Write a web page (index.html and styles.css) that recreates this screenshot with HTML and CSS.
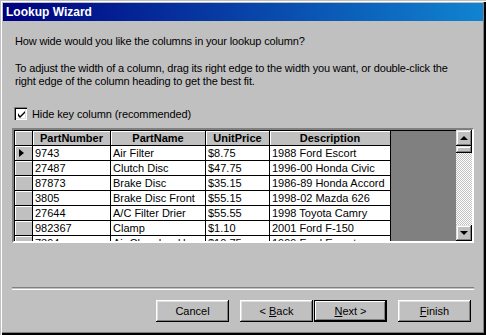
FILE: index.html
```html
<!DOCTYPE html>
<html lang="en">
<head>
<meta charset="UTF-8">
<title>Lookup Wizard</title>
<link rel="stylesheet" href="styles.css">
</head>
<body>
<div class="window">
  <div class="titlebar">Lookup Wizard</div>

  <div class="content">
    <p class="intro">How wide would you like the columns in your lookup column?</p>
    <p class="help">To adjust the width of a column, drag its right edge to the width you want, or double-click the right edge of the column heading to get the best fit.</p>

    <label class="check-row">
      <span class="checkbox">
        <svg width="7" height="7" viewBox="0 0 7 7"><path d="M0 2 L0 5 L2 7 L7 2 L7 0 L2 5 Z" fill="#000"/></svg>
      </span>
      Hide key column (recommended)
    </label>

    <!-- Datasheet -->
    <div class="sheet">
      <div class="sheet-body">
        <div class="row head">
          <div class="cell sel"></div>
          <div class="cell">PartNumber</div>
          <div class="cell">PartName</div>
          <div class="cell">UnitPrice</div>
          <div class="cell">Description</div>
        </div>
        <div class="row">
          <div class="cell sel"><span class="pointer"></span></div>
          <div class="cell">9743</div>
          <div class="cell">Air Filter</div>
          <div class="cell">$8.75</div>
          <div class="cell">1988 Ford Escort</div>
        </div>
        <div class="row">
          <div class="cell sel"></div>
          <div class="cell">27487</div>
          <div class="cell">Clutch Disc</div>
          <div class="cell">$47.75</div>
          <div class="cell">1996-00 Honda Civic</div>
        </div>
        <div class="row">
          <div class="cell sel"></div>
          <div class="cell">87873</div>
          <div class="cell">Brake Disc</div>
          <div class="cell">$35.15</div>
          <div class="cell">1986-89 Honda Accord</div>
        </div>
        <div class="row">
          <div class="cell sel"></div>
          <div class="cell">3805</div>
          <div class="cell">Brake Disc Front</div>
          <div class="cell">$55.15</div>
          <div class="cell">1998-02 Mazda 626</div>
        </div>
        <div class="row">
          <div class="cell sel"></div>
          <div class="cell">27644</div>
          <div class="cell">A/C Filter Drier</div>
          <div class="cell">$55.55</div>
          <div class="cell">1998 Toyota Camry</div>
        </div>
        <div class="row">
          <div class="cell sel"></div>
          <div class="cell">982367</div>
          <div class="cell">Clamp</div>
          <div class="cell">$1.10</div>
          <div class="cell">2001 Ford F-150</div>
        </div>
        <div class="row">
          <div class="cell sel"></div>
          <div class="cell">7394</div>
          <div class="cell">Air Chamber Hose</div>
          <div class="cell">$10.75</div>
          <div class="cell">1999 Ford Escort</div>
        </div>
      </div>
      <div class="scrollbar">
        <div class="sb-btn"><span class="arrow up"></span></div>
        <div class="sb-track"><div class="sb-thumb"></div></div>
        <div class="sb-btn"><span class="arrow down"></span></div>
      </div>
    </div>

    <div class="separator"></div>

    <div class="buttons">
      <button class="btn gap">Cancel</button>
      <button class="btn">&lt; <u>B</u>ack</button>
      <button class="btn default gap"><u>N</u>ext &gt;</button>
      <button class="btn"><u>F</u>inish</button>
    </div>
  </div>
</div>
</body>
</html>
```

FILE: styles.css
```css
body {
  margin: 0;
  background: #c0c0c0;
  font-family: "Liberation Sans", Arial, sans-serif;
  font-size: 11px;
  color: #000;
}
.window {
  width: 486px;
  height: 335px;
  box-sizing: border-box;
  padding: 3px;
  background: #c0c0c0;
  box-shadow: inset 1px 1px #c0c0c0, inset 2px 2px #fff, inset -2px -2px #000, inset -3px -3px #808080;
}
.titlebar {
  height: 18px;
  line-height: 18px;
  padding-left: 3px;
  background: linear-gradient(to right, #000080, #1084d0);
  color: #fff;
  font-weight: bold;
  font-size: 12px;
}
.content {
  padding: 14px 9px 0 9px;
}
.intro, .help {
  margin: 0;
  padding-left: 3px;
  line-height: 13px;
  letter-spacing: -0.15px;
}
.help {
  margin-top: 14px;
  max-width: 440px;
}
.check-row {
  display: flex;
  align-items: center;
  gap: 5px;
  margin: 19px 0 0 2px;
  height: 13px;
  letter-spacing: -0.1px;
}
.checkbox {
  width: 13px;
  height: 13px;
  box-sizing: border-box;
  background: #fff;
  display: flex;
  align-items: center;
  justify-content: center;
  box-shadow: inset 1px 1px #808080, inset 2px 2px #000, inset -1px -1px #fff, inset -2px -2px #dfdfdf;
}
.checkbox svg {
  margin: 1px 0 0 1px;
}

/* datasheet */
.sheet {
  margin-top: 8px;
  height: 115px;
  box-sizing: border-box;
  border: 2px solid;
  border-color: #808080 #fff #fff #808080;
  display: flex;
  background: #808080;
  box-shadow: inset 1px 1px #000;
}
.sheet-body {
  flex: 1;
  overflow: hidden;
  padding: 1px 0 0 1px;
}
.row {
  display: grid;
  grid-template-columns: 18px 78px 95px 64px 121px;
  height: 15px;
}
.cell {
  box-sizing: border-box;
  border-right: 1px solid #000;
  border-bottom: 1px solid #000;
  background: #fff;
  padding-left: 2px;
  line-height: 14px;
  white-space: nowrap;
  overflow: hidden;
}
.head .cell {
  background: #c0c0c0;
  font-weight: bold;
  text-align: center;
  padding-left: 0;
  box-shadow: inset 1px 1px #fff;
}
.cell.sel {
  background: #c0c0c0;
  box-shadow: inset 1px 1px #fff;
  display: flex;
  align-items: center;
  padding-left: 4px;
}
.pointer {
  width: 0;
  height: 0;
  border-top: 4px solid transparent;
  border-bottom: 4px solid transparent;
  border-left: 5px solid #000;
}
.scrollbar {
  width: 16px;
  display: flex;
  flex-direction: column;
}
.sb-btn, .sb-thumb {
  height: 16px;
  box-sizing: border-box;
  background: #c0c0c0;
  box-shadow: inset -1px -1px #000, inset 1px 1px #dfdfdf, inset -2px -2px #808080, inset 2px 2px #fff;
  display: flex;
  align-items: center;
  justify-content: center;
}
.sb-thumb {
  height: 7px;
}
.sb-track {
  flex: 1;
  background-color: #c0c0c0;
  background-image: conic-gradient(#fff 25%, #c0c0c0 0 50%, #fff 0 75%, #c0c0c0 0);
  background-size: 2px 2px;
}
.arrow {
  width: 0;
  height: 0;
  border-left: 4px solid transparent;
  border-right: 4px solid transparent;
}
.arrow.up {
  border-bottom: 4px solid #000;
}
.arrow.down {
  border-top: 4px solid #000;
}

.separator {
  margin-top: 44px;
  height: 1px;
  border-top: 1px solid #808080;
  border-bottom: 1px solid #fff;
}
.buttons {
  display: flex;
  justify-content: flex-end;
  margin-top: 10px;
  padding-right: 3px;
}
.btn {
  width: 73px;
  height: 22px;
  margin-left: 1px;
  border: none;
  padding: 0;
  background: #c0c0c0;
  font-family: "Liberation Sans", Arial, sans-serif;
  font-size: 11px;
  color: #000;
  box-shadow: inset -1px -1px #000, inset 1px 1px #fff, inset -2px -2px #808080, inset 2px 2px #dfdfdf;
}
.btn.gap {
  margin-right: 10px;
}
.btn.default {
  box-shadow: inset 0 0 0 1px #000, inset -2px -2px #000, inset 2px 2px #fff, inset -3px -3px #808080;
}
.btn u {
  text-decoration: underline;
}
```
